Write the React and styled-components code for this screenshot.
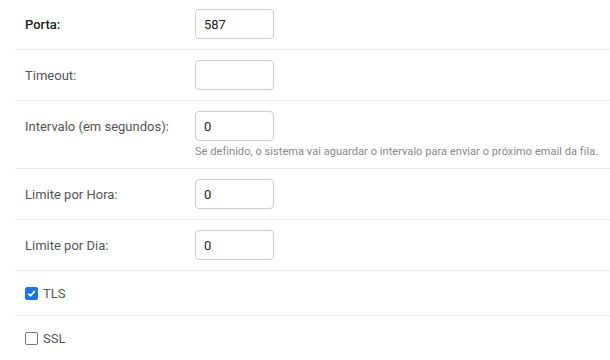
import React from 'react';
import styled, { createGlobalStyle } from 'styled-components';

const GlobalStyle = createGlobalStyle`
  body {
    margin: 0;
    background: #fff;
    font-family: Roboto, "Liberation Sans", sans-serif;
  }
`;

const Form = styled.div`
  padding-left: 15px;
  margin-top: -1px;
`;

const Row = styled.div`
  display: flex;
  align-items: flex-start;
  padding: 10px 0;
  border-bottom: 1px solid #ebebeb;
`;

const Label = styled.label`
  width: 170px;
  padding-left: 10px;
  height: 30px;
  display: flex;
  align-items: center;
  font-size: 13px;
  color: ${(p) => (p.$strong ? '#222' : '#555')};
  font-weight: ${(p) => (p.$strong ? 500 : 400)};
`;

const Field = styled.div`
  display: flex;
  flex-direction: column;
`;

const Input = styled.input`
  box-sizing: border-box;
  width: 79px;
  height: 30px;
  padding: 0 8px;
  border: 1px solid #ccc;
  border-radius: 4px;
  font-family: inherit;
  font-size: 13px;
  color: #222;
  outline: none;
`;

const Help = styled.div`
  margin-top: 5px;
  font-size: 11px;
  line-height: 12px;
  color: #888;
  white-space: nowrap;
  letter-spacing: 0.005em;
`;

const CheckRow = styled.label`
  display: flex;
  align-items: center;
  gap: 5px;
  height: 44px;
  padding-left: 10px;
  border-bottom: 1px solid #ebebeb;
  font-size: 13px;
  color: #555;
`;

const Box = styled.span`
  box-sizing: border-box;
  width: 13px;
  height: 13px;
  border-radius: 2px;
  display: flex;
  align-items: center;
  justify-content: center;
  background: ${(p) => (p.$on ? '#1a73e8' : '#fff')};
  border: 1px solid ${(p) => (p.$on ? '#1a73e8' : '#767676')};
`;

function Check({ on, label }) {
  return (
    <CheckRow>
      <Box $on={on}>
        {on && (
          <svg width="9" height="9" viewBox="0 0 10 10">
            <path d="M1.5 5.2 L4 7.6 L8.6 2.4" fill="none" stroke="#fff" strokeWidth="1.9" />
          </svg>
        )}
      </Box>
      {label}
    </CheckRow>
  );
}

export default function App() {
  return (
    <>
      <GlobalStyle />
      <Form>
        <Row>
          <Label $strong>Porta:</Label>
          <Input defaultValue="587" />
        </Row>
        <Row>
          <Label>Timeout:</Label>
          <Input defaultValue="" />
        </Row>
        <Row>
          <Label>Intervalo (em segundos):</Label>
          <Field>
            <Input defaultValue="0" />
            <Help>Se definido, o sistema vai aguardar o intervalo para enviar o próximo email da fila.</Help>
          </Field>
        </Row>
        <Row>
          <Label>Limite por Hora:</Label>
          <Input defaultValue="0" />
        </Row>
        <Row>
          <Label>Limite por Dia:</Label>
          <Input defaultValue="0" />
        </Row>
        <Check on label="TLS" />
        <Check label="SSL" />
      </Form>
    </>
  );
}
